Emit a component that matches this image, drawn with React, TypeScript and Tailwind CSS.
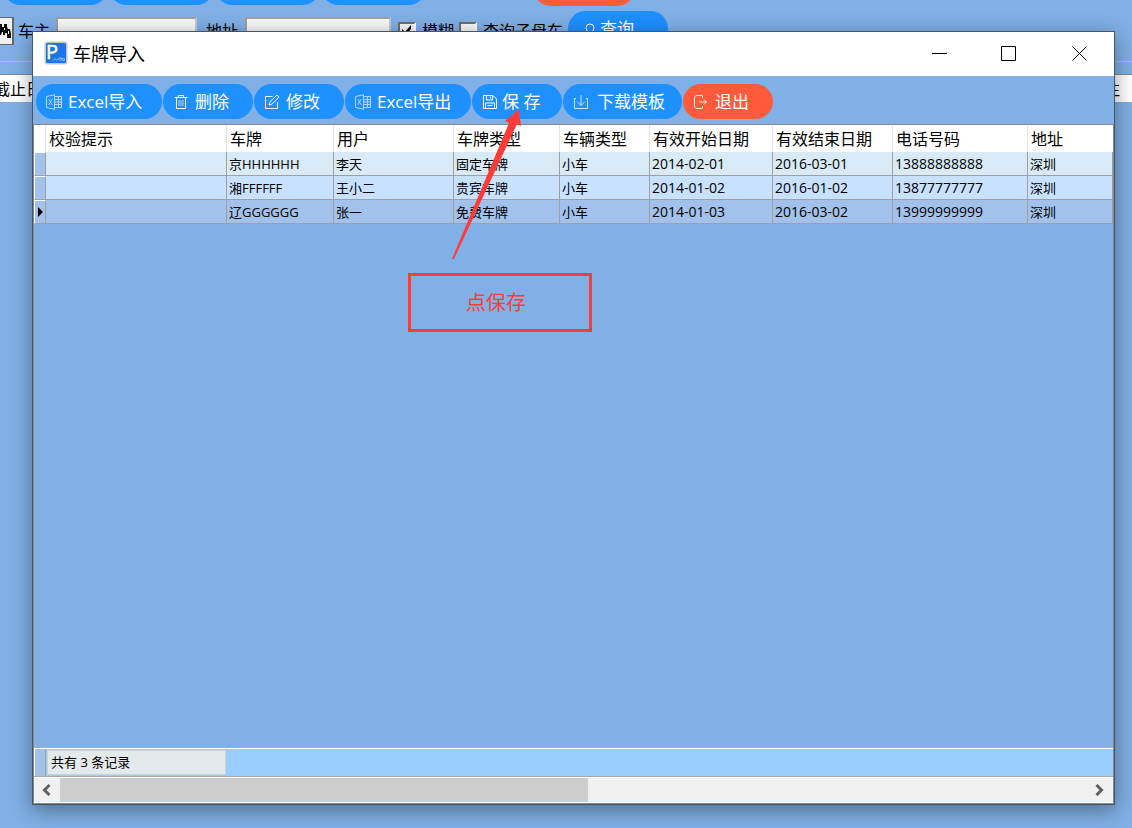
import type { ReactNode } from 'react'

interface ToolAction {
  label: string
  icon: ReactNode
  className: string
}

interface PlateRow {
  plate: string
  user: string
  plateType: string
  carType: string
  start: string
  end: string
  phone: string
  address: string
}

const rows: Array<PlateRow> = [
  {
    plate: '京HHHHHH',
    user: '李天',
    plateType: '固定车牌',
    carType: '小车',
    start: '2014-02-01',
    end: '2016-03-01',
    phone: '13888888888',
    address: '深圳',
  },
  {
    plate: '湘FFFFFF',
    user: '王小二',
    plateType: '贵宾车牌',
    carType: '小车',
    start: '2014-01-02',
    end: '2016-01-02',
    phone: '13877777777',
    address: '深圳',
  },
  {
    plate: '辽GGGGGG',
    user: '张一',
    plateType: '免费车牌',
    carType: '小车',
    start: '2014-01-03',
    end: '2016-03-02',
    phone: '13999999999',
    address: '深圳',
  },
]

const rowColors = ['bg-[#d8eaf5]', 'bg-[#c8e1ff]', 'bg-[#a3c2eb]']

const headers = [
  '校验提示',
  '车牌',
  '用户',
  '车牌类型',
  '车辆类型',
  '有效开始日期',
  '有效结束日期',
  '电话号码',
  '地址',
]

function Icon({ children }: { children: ReactNode }) {
  return (
    <svg
      viewBox="0 0 16 16"
      className="size-4 shrink-0"
      fill="none"
      stroke="currentColor"
      aria-hidden="true"
    >
      {children}
    </svg>
  )
}

function ExcelIcon() {
  return (
    <Icon>
      <g opacity=".65">
        <path d="M8.500.5v15M.5 2.500 8.500.8M.5 13.500l8 1.700M.5 2.500v11" />
        <path d="M2.700 5l3.600 6M6.300 5l-3.600 6M9 2.500h6.500v11H9M12.500 2.500v11M9 5.500h6.500M9 8h6.500M9 10.500h6.500" />
      </g>
    </Icon>
  )
}

const actions: Array<ToolAction> = [
  {
    label: 'Excel导入',
    icon: <ExcelIcon />,
    className: 'w-[126px] gap-1.5 bg-[#1e90ff]',
  },
  {
    label: '删除',
    icon: (
      <Icon>
        <path d="M1.500 3.500h13M5.500 3.500v-2h5v2M3.500 3.500v11h9v-11" />
        <path opacity=".6" d="M6 6v6M8 6v6M10 6v6" />
      </Icon>
    ),
    className: 'w-[90px] gap-1.5 bg-[#1e90ff]',
  },
  {
    label: '修改',
    icon: (
      <Icon>
        <path d="M8.500 2.500h-7v12h12V8" />
        <path d="M5 11l1-3.200L13 1l2 2-6.800 7z" />
      </Icon>
    ),
    className: 'w-[90px] gap-1.5 bg-[#1e90ff]',
  },
  {
    label: 'Excel导出',
    icon: <ExcelIcon />,
    className: 'w-[126px] gap-1.5 bg-[#1e90ff]',
  },
  {
    label: '保 存',
    icon: (
      <Icon>
        <path d="M1.500 1.500h9.500l3.500 3.500v9.500h-13zM4.500 1.500V6h6V1.500M3.500 14.500V9h9v5.500M8.500 2.500v2M5.500 11.500h5" />
      </Icon>
    ),
    className: 'w-[90px] gap-1 bg-[#1e90ff]',
  },
  {
    label: '下载模板',
    icon: (
      <Icon>
        <path opacity=".75" d="M3 4.500H1.500v10h13v-10H13M8 1v10.500M4.200 7.700 8 11.500l3.800-3.800" />
      </Icon>
    ),
    className: 'w-[119px] gap-2 bg-[#1e90ff]',
  },
  {
    label: '退出',
    icon: (
      <Icon>
        <path opacity=".85" d="M9.500 4V2q0-.5-.5-.5H3L1.500 3v10L3 14.500h6q.5 0 .5-.5v-2M6 8h7.500M11 5.500 13.500 8 11 10.500" />
      </Icon>
    ),
    className: 'w-[90px] gap-1.5 bg-[#ff5a3c]',
  },
]

function SearchCheckbox({
  id,
  label,
  checked,
}: {
  id: string
  label: string
  checked: boolean
}) {
  return (
    <>
      <span className="relative mt-[11px] block size-[18px]">
        <input
          id={id}
          type="checkbox"
          defaultChecked={checked}
          className="peer block size-[18px] appearance-none border-2 border-t-[#6e6e6e] border-r-white border-b-white border-l-[#6e6e6e] bg-[#f8f8f8]"
        />
        <svg
          viewBox="0 0 18 18"
          className="pointer-events-none absolute inset-0 hidden size-[18px] peer-checked:block"
          aria-hidden="true"
        >
          <path d="M4 7v4l3 3 6-7V3L7 10z" />
        </svg>
      </span>
      <label htmlFor={id} className="mr-[5px] ml-1.5 mt-2 leading-6">
        {label}
      </label>
    </>
  )
}

function SearchPage() {
  return (
    <div>
      <div className="-mt-[30px] flex gap-px pl-[3px]">
        <button aria-label="新增" className="h-[35px] w-[105px] rounded-full bg-[#1e90ff]" />
        <button aria-label="编辑" className="h-[35px] w-[105px] rounded-full bg-[#1e90ff]" />
        <button aria-label="导入" className="h-[35px] w-[105px] rounded-full bg-[#1e90ff]" />
        <button aria-label="导出" className="h-[35px] w-[105px] rounded-full bg-[#1e90ff]" />
        <button aria-label="关闭" className="ml-[106px] h-9 w-[102px] rounded-full bg-[#ff5a3c]" />
      </div>
      <div className="mt-[5px] flex h-[50px] items-start overflow-hidden text-base whitespace-nowrap">
        <button
          aria-label="查找"
          className="mt-1.5 h-7 w-3.5 overflow-hidden border border-[#666] border-r-2 border-l-0 bg-[#f0f0f0]"
        >
          <svg viewBox="0 0 12 24" className="h-6 w-3" aria-hidden="true">
            <path d="M0 5h2v3h2V5h3v3l1 2h2l1 5v4H7v-5H5v2H3v-3H2l-1 3H0z" />
            <path fill="#fff" d="M4 9h1v2H4zM8 12h1v3H8z" />
          </svg>
        </button>
        <label htmlFor="owner" className="mr-[3px] ml-1 mt-2 w-[35px] leading-6">
          车主
        </label>
        <input
          id="owner"
          className="mt-1.5 h-7 w-[141px] border-2 border-[#a0a0a0] border-r-[#c8c8c8] bg-[#f8f8f8]"
        />
        <label htmlFor="address" className="mr-1.5 ml-[9px] mt-2 w-[33px] leading-6">
          地址
        </label>
        <input
          id="address"
          className="mr-[7px] mt-1.5 h-7 w-[146px] border-2 border-[#a0a0a0] border-r-[#c8c8c8] bg-[#f8f8f8]"
        />
        <SearchCheckbox id="fuzzy" label="模糊" checked />
        <SearchCheckbox id="family" label="查询子母车" checked={false} />
        <button className="flex h-[35px] w-[100px] items-center rounded-full bg-[#1e90ff] pl-4 text-[17px] text-white">
          <Icon>
            <circle cx="6" cy="7" r="4" />
            <path d="M9 10l4 4" />
          </Icon>
          查询
        </button>
      </div>
      <div className="mb-3 h-px bg-[#b4bcc6]" />
      <div className="flex h-7 items-center justify-between overflow-hidden border-t border-[#828790] bg-white text-base">
        <span className="-ml-1.5">截止日期</span>
        <span className="mr-3">备注</span>
      </div>
    </div>
  )
}

function TitleBar() {
  return (
    <header className="flex h-11 items-center bg-white">
      <svg viewBox="0 0 24 24" className="ml-[11px] size-6 overflow-visible" aria-hidden="true">
        <rect x=".5" y="-.5" width="23" height="23" rx="3" fill="#c3c6ca" />
        <rect x="2" y="1" width="20" height="20" rx="1.500" fill="#1d74e2" />
        <text
          x="2"
          y="17"
          fill="#fff"
          stroke="#fff"
          strokeWidth=".5"
          className="font-['Open_Sans'] text-[20px]"
        >
          P
        </text>
        <path
          d="M9 18.500l1.500-2 1.500 1.500M12 18.500l2.500-2 1 2M15 16h3M17 16v3M18.500 16.500h2v2h-2z"
          fill="none"
          stroke="#9ccaff"
          strokeWidth=".8"
        />
      </svg>
      <h1 className="ml-[5px] text-lg">车牌导入</h1>
      <div className="ml-auto flex h-full">
        <button aria-label="最小化" className="grid w-[70px] place-items-center">
          <svg viewBox="0 0 16 16" className="size-4" stroke="#000" aria-hidden="true">
            <path d="M1 7.500h15" />
          </svg>
        </button>
        <button aria-label="最大化" className="grid w-[70px] place-items-center">
          <svg viewBox="0 0 16 16" className="size-4" fill="none" stroke="#000" aria-hidden="true">
            <path d="M.5.5h14v14H.5z" />
          </svg>
        </button>
        <button aria-label="关闭窗口" className="grid w-[70px] place-items-center">
          <svg viewBox="0 0 16 16" className="size-4" stroke="#000" aria-hidden="true">
            <path d="M1.500.5l14 14M15.500.5l-14 14" />
          </svg>
        </button>
      </div>
    </header>
  )
}

function PlateTable() {
  const cell = 'h-6 border-r border-b border-[#a0a0a0] py-0 pr-0 pl-0.5 leading-5'
  return (
    <table className="w-full table-fixed border-separate border-spacing-0 text-[13px] whitespace-nowrap">
      <colgroup>
        <col className="w-3" />
        <col className="w-[181px]" />
        <col className="w-[107px]" />
        <col className="w-[120px]" />
        <col className="w-[106px]" />
        <col className="w-[90px]" />
        <col className="w-[123px]" />
        <col className="w-[120px]" />
        <col className="w-[135px]" />
        <col />
      </colgroup>
      <thead>
        <tr className="bg-white text-left text-base">
          <td className="border-r border-[#e5e5e5]" />
          {headers.map((header) => (
            <th
              key={header}
              className="h-[27px] border-r border-[#e5e5e5] py-0 pr-0 pl-[3px] leading-6 font-normal last:border-r-0"
            >
              {header}
            </th>
          ))}
        </tr>
      </thead>
      <tbody>
        {rows.map((row, i) => (
          <tr key={row.plate} className={rowColors[i]}>
            <td className="h-6 border border-t-white border-r-[#a0a0a0] border-b-[#a0a0a0] border-l-white bg-[#a3c2eb] p-0">
              {i === 2 ? (
                <svg viewBox="0 0 10 12" className="h-3 w-2.5" aria-hidden="true">
                  <path d="M3 1v10l5-5z" />
                </svg>
              ) : null}
            </td>
            <td className={cell} />
            <td className={cell}>{row.plate}</td>
            <td className={cell}>{row.user}</td>
            <td className={cell}>{row.plateType}</td>
            <td className={cell}>{row.carType}</td>
            <td className={`${cell} text-sm`}>{row.start}</td>
            <td className={`${cell} text-sm`}>{row.end}</td>
            <td className={`${cell} text-sm`}>{row.phone}</td>
            <td className={cell}>{row.address}</td>
          </tr>
        ))}
      </tbody>
    </table>
  )
}

function GridFooter() {
  return (
    <footer className="mt-auto">
      <div className="border-y border-[#a8a8a8]">
        <div className="flex h-7 border-t border-white bg-[#9acdff] text-[13px]">
          <div className="w-3 border-r border-l border-r-[#a0a0a0] border-l-white bg-[#a3c2eb]" />
          <div className="my-px ml-px flex w-[179px] items-center border border-[#cdd1d2] bg-[#e4e9ea] pl-[3px]">
            共有 3 条记录
          </div>
        </div>
      </div>
      <div className="flex h-[26px] border-y border-white bg-[#f0f0f0]">
        <button aria-label="向左滚动" className="grid w-[26px] place-items-center">
          <svg viewBox="0 0 12 12" className="size-3" fill="none" stroke="#606060" strokeWidth="3" aria-hidden="true">
            <path d="M8.500 1l-5 5 5 5" />
          </svg>
        </button>
        <div className="flex-1">
          <div className="h-full w-[51.4%] bg-[#cdcdcd]" />
        </div>
        <button aria-label="向右滚动" className="grid w-[26px] place-items-center">
          <svg viewBox="0 0 12 12" className="size-3" fill="none" stroke="#606060" strokeWidth="3" aria-hidden="true">
            <path d="M2.500 1l5 5-5 5" />
          </svg>
        </button>
      </div>
    </footer>
  )
}

export default function App() {
  return (
    <main className="relative flow-root min-h-screen overflow-hidden bg-[#80b0e6] font-['Open_Sans','Noto_Sans_CJK_SC',sans-serif] text-black">
      <SearchPage />

      <section className="absolute top-[31px] right-[17px] bottom-[23px] left-8 flex flex-col border border-[#46566a] bg-[#80b0e6] shadow-[0_5px_20px_rgba(0,0,0,0.4)]">
        <TitleBar />
        <nav className="flex h-12 gap-px pt-2 pl-[3px]">
          {actions.map((action) => (
            <button
              key={action.label}
              className={`flex h-[35px] shrink-0 items-center rounded-full pl-2.5 text-[17px] whitespace-nowrap text-white ${action.className}`}
            >
              {action.icon}
              {action.label}
            </button>
          ))}
        </nav>
        <div className="flex flex-1 flex-col border border-[#828790]">
          <PlateTable />
          <GridFooter />
        </div>
      </section>

      {/* callout pointing at the save button */}
      <svg
        viewBox="0 0 70 152"
        className="pointer-events-none absolute top-[108px] left-[452px] h-[152px] w-[70px]"
        fill="#ff3b37"
        aria-hidden="true"
      >
        <path d="M0 151 57 15l-4-2L67 1l2 17-4-2L2 151z" />
      </svg>
      <div className="absolute top-[273px] left-[408px] grid h-[59px] w-[184px] place-items-center border-3 border-[#ff3b37] pr-2 text-xl text-[#ff3b37]">
        点保存
      </div>
    </main>
  )
}
